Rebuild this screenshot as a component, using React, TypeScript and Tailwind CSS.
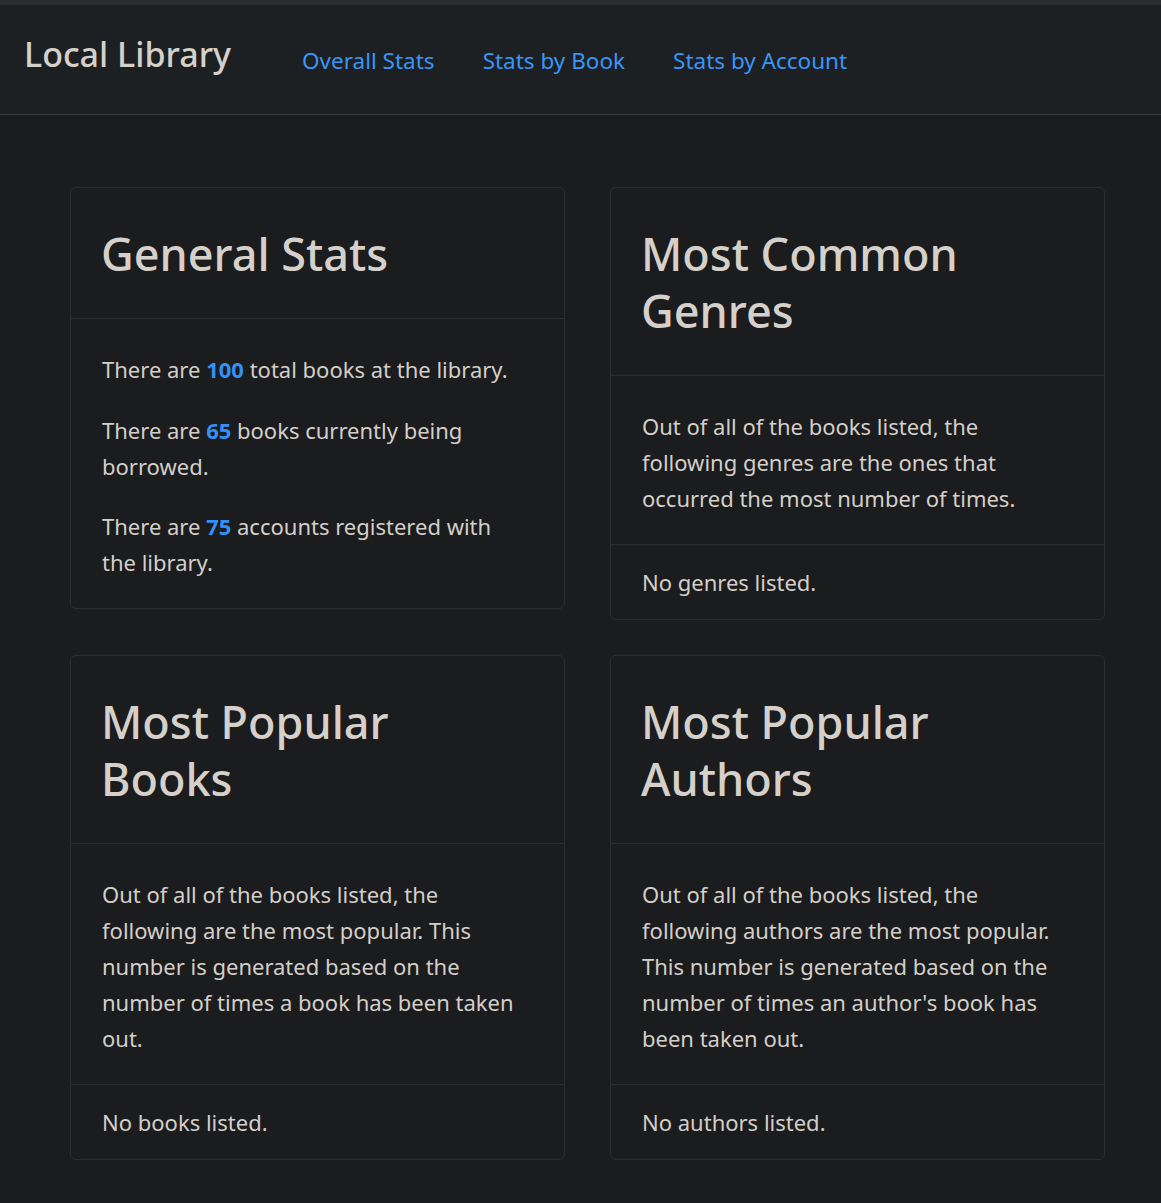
const FONT = "font-['Noto_Sans','Open_Sans',sans-serif]";

type CardProps = {
  title: React.ReactNode;
  children: React.ReactNode;
  footer?: string;
};

const Card = ({ title, children, footer }: CardProps) => (
  <div className="flex flex-col rounded-md border border-[#2b2e30] bg-[#1b1c1e]">
    <div className="border-b border-[#2b2e30] pl-[30px] pr-12 pt-[37px] pb-9">
      <h2 className="text-[45px] font-medium leading-[57px] text-[#d5d1ca]">{title}</h2>
    </div>
    <div className="pl-[31px] pr-10 pt-8 pb-7 text-[22px] leading-9 text-[#d3cfc8]">
      {children}
    </div>
    {footer && (
      <div className="border-t border-[#2b2e30] pl-[31px] pr-8 py-[19px] text-[22px] leading-9 text-[#d3cfc8]">
        {footer}
      </div>
    )}
  </div>
);

const Num = ({ n }: { n: number }) => (
  <span className="font-bold text-[#3391f5]">{n}</span>
);

export default function App() {
  return (
    <div className={`min-h-[1203px] bg-[#1b1c1e] ${FONT}`}>
      <div className="h-[5px] bg-[#2a2b2d]" />
      <nav className="flex h-[110px] items-center border-b border-[#3b3e40] bg-[#1d2022] px-6">
        <span className="mr-[47px] mb-[10px] text-[34px] font-medium text-[#d5d1ca]">
          Local Library
        </span>
        <div className="flex pt-[2px] text-[22.5px] text-[#3a95f5]">
          <a className="px-6">Overall Stats</a>
          <a className="px-6">Stats by Book</a>
          <a className="px-6">Stats by Account</a>
        </div>
      </nav>

      <main className="grid grid-cols-[495px_495px] items-start gap-x-[45px] gap-y-[35px] pl-[70px] pt-[72px] pb-11">
        <Card title="General Stats">
          <p className="mb-[24.5px]">
            There are <Num n={100} /> total books at the library.
          </p>
          <p className="mb-[24.5px]">
            There are <Num n={65} /> books currently being borrowed.
          </p>
          <p>
            There are <Num n={75} /> accounts registered with the library.
          </p>
        </Card>

        <Card title="Most Common Genres" footer="No genres listed.">
          <p>
            Out of all of the books listed, the following genres are the ones that occurred the
            most number of times.
          </p>
        </Card>

        <Card title="Most Popular Books" footer="No books listed.">
          <p>
            Out of all of the books listed, the following are the most popular. This number is
            generated based on the number of times a book has been taken out.
          </p>
        </Card>

        <Card title="Most Popular Authors" footer="No authors listed.">
          <p>
            Out of all of the books listed, the following authors are the most popular. This
            number is generated based on the number of times an author's book has been taken
            out.
          </p>
        </Card>
      </main>
    </div>
  );
}
